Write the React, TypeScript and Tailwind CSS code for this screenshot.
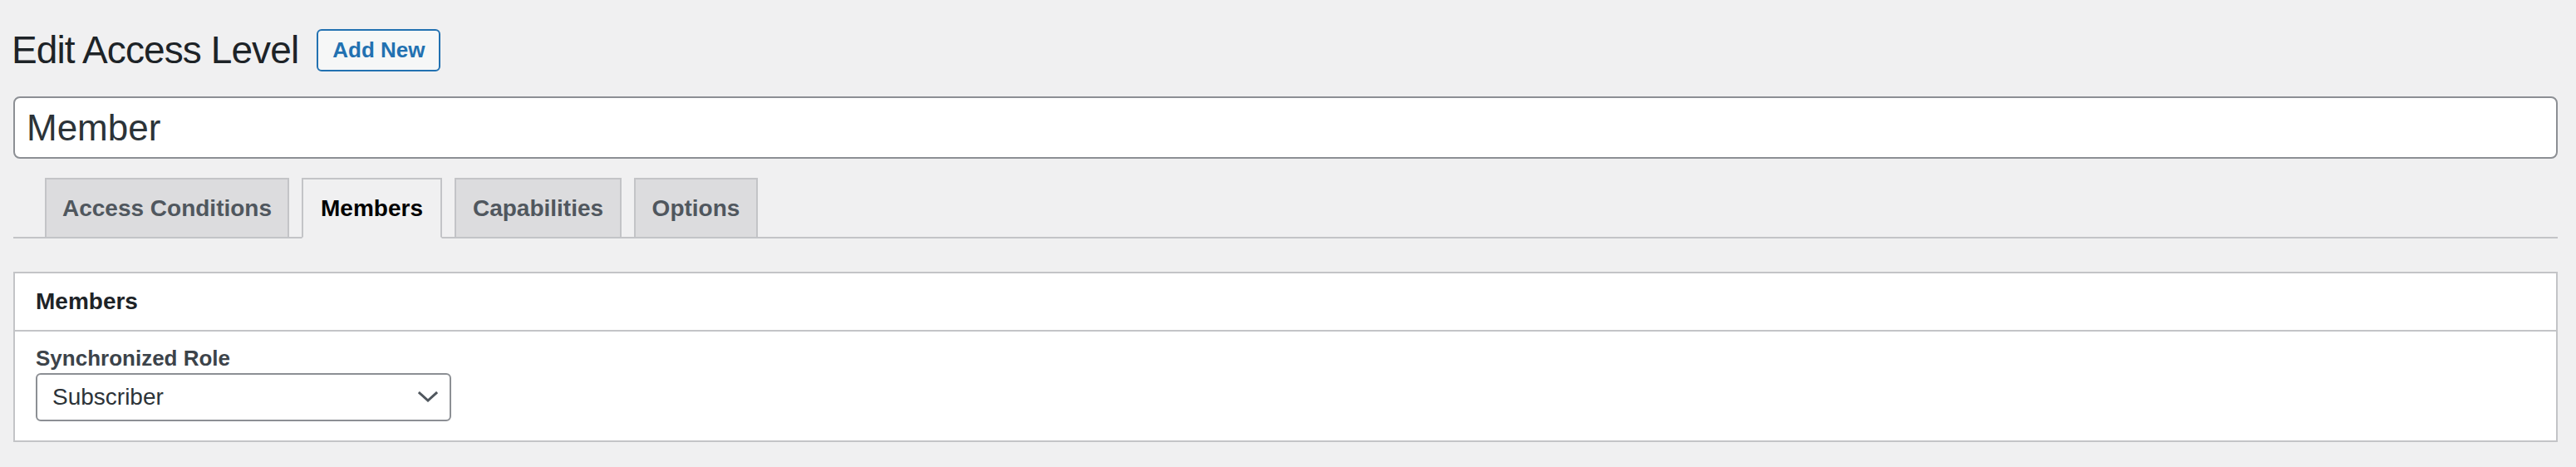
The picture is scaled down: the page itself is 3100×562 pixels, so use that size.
import React from "react";

// Tabs shown under the title field; widths taken from the reference so the row lines up
const tabs = [
  { label: "Access Conditions", width: "w-[294px]", active: false },
  { label: "Members", width: "w-[169px]", active: true },
  { label: "Capabilities", width: "w-[201px]", active: false },
  { label: "Options", width: "w-[149px]", active: false },
];

export default function App() {
  return (
    <div className="h-[562px] overflow-hidden bg-[#f0f0f1] pt-[30px] pl-[16px] pr-[22px] font-['Liberation_Sans',Arial,sans-serif] text-[#3c434a]">
      {/* Page title with the Add New button */}
      <div className="flex h-[60px] items-center">
        <h1 className="-ml-[2px] text-[46px] leading-[60px] font-normal tracking-[-0.9px] text-[#1d2327]">
          Edit Access Level
        </h1>
        <button className="ml-[22px] flex h-[51px] items-center rounded-[6px] border-2 border-[#2271b1] bg-[#f6f7f7] px-[17px] text-[26px] font-bold text-[#2271b1]">
          Add New
        </button>
      </div>

      {/* Title field */}
      <div className="mt-[26px] flex h-[75px] items-center rounded-[8px] border-2 border-[#8c8f94] bg-white px-[14px] text-[44px] text-[#2c3338]">
        Member
      </div>

      {/* Tab bar */}
      <div className="mt-[23px] flex items-end gap-[15px] border-b-2 border-[#c3c4c7] pl-[38px]">
        {tabs.map((tab) => (
          <div
            key={tab.label}
            className={`-mb-[2px] flex h-[73px] items-center justify-center border-2 text-[28px] font-bold leading-[48px] ${tab.width} ${
              tab.active
                ? "border-[#c3c4c7] border-b-[#f0f0f1] bg-[#f0f0f1] text-black"
                : "border-[#c3c4c7] bg-[#dcdcde] text-[#50575e]"
            }`}
          >
            {tab.label}
          </div>
        ))}
      </div>

      {/* Members panel */}
      <div className="mt-[40px] border-2 border-[#c3c4c7] bg-white">
        <div className="flex h-[70px] items-center border-b-2 border-[#c3c4c7] px-[25px] text-[28px] font-bold text-[#1d2327]">
          Members
        </div>
        <div className="px-[25px] pt-[14px] pb-[23px]">
          <div className="text-[26px] font-bold leading-[36px] text-[#3c434a]">Synchronized Role</div>
          <div className="flex h-[58px] w-[500px] items-center justify-between rounded-[6px] border-2 border-[#8c8f94] bg-white pl-[18px] pr-[14px] text-[28px] text-[#2c3338]">
            <span>Subscriber</span>
            <svg width="24" height="14" viewBox="0 0 24 14" fill="none">
              <polyline points="2,2 12,11 22,2" stroke="#50575e" strokeWidth="3" strokeLinecap="square" />
            </svg>
          </div>
        </div>
      </div>
    </div>
  );
}
